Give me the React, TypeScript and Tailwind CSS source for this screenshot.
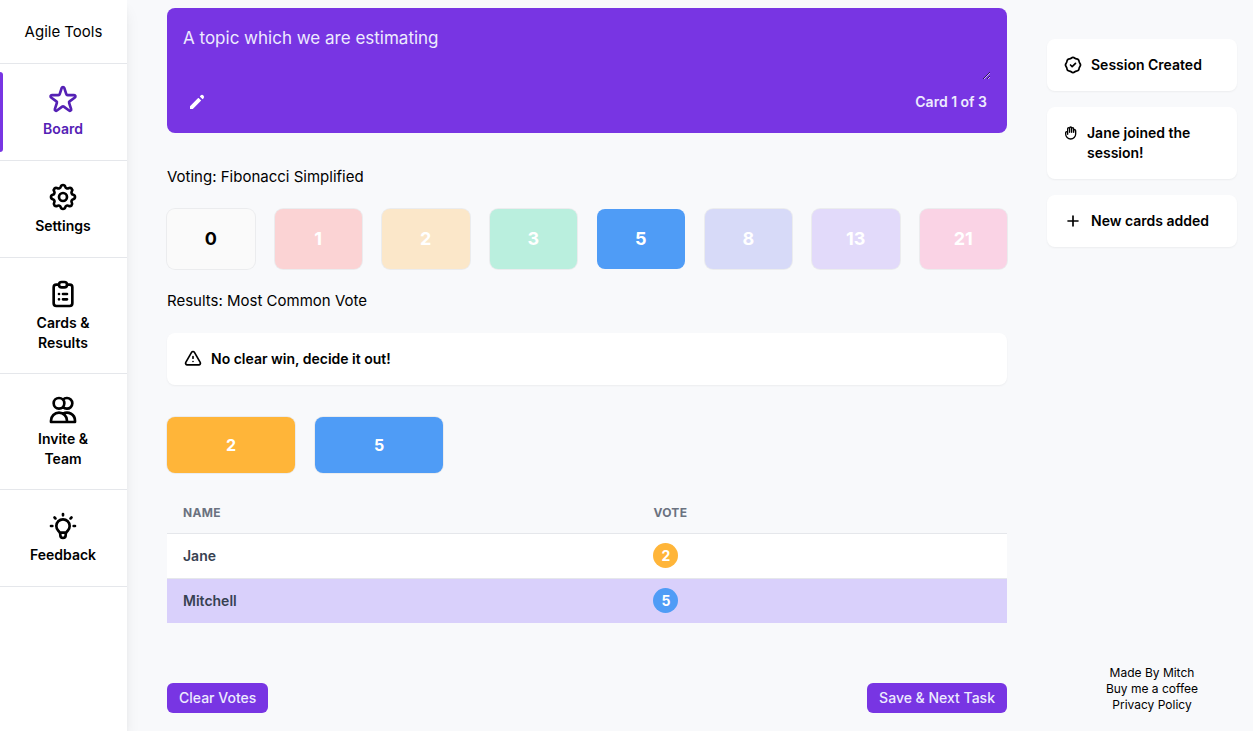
import {
  HiOutlineBadgeCheck,
  HiOutlineClipboardList,
  HiOutlineCog,
  HiOutlineExclamation,
  HiOutlineHand,
  HiOutlineLightBulb,
  HiOutlineStar,
  HiOutlineUsers,
  HiPencil,
} from "react-icons/hi";

const nav = [
  { label: "Board", Icon: HiOutlineStar, active: true },
  { label: "Settings", Icon: HiOutlineCog, active: false },
  { label: "Cards & Results", Icon: HiOutlineClipboardList, active: false },
  { label: "Invite & Team", Icon: HiOutlineUsers, active: false },
  { label: "Feedback", Icon: HiOutlineLightBulb, active: false },
];

const ring = "shadow-[0_0_0_1px_rgba(0,0,0,0.05)]";

const cards = [
  { value: 0, style: `bg-[#fafafa] text-black ${ring}` },
  { value: 1, style: `bg-[#fbd3d4] text-white ${ring}` },
  { value: 2, style: `bg-[#fbe7c9] text-white ${ring}` },
  { value: 3, style: `bg-[#baefde] text-white ${ring}` },
  { value: 5, style: "bg-[#4f9cf6] text-white" },
  { value: 8, style: `bg-[#d7daf8] text-white ${ring}` },
  { value: 13, style: `bg-[#e2dafa] text-white ${ring}` },
  { value: 21, style: `bg-[#fad3e5] text-white ${ring}` },
];

const votes = [
  { name: "Jane", vote: 2, row: "border-b border-gray-200 bg-white", color: "bg-[#ffb539]" },
  { name: "Mitchell", vote: 5, row: "bg-[#d9d0fb]", color: "bg-[#4f9cf6]" },
];

function PlusIcon({ className }: { className: string }) {
  return (
    <svg
      viewBox="0 0 24 24"
      className={className}
      fill="none"
      stroke="currentColor"
      strokeWidth={2}
      strokeLinecap="round"
      aria-hidden="true"
    >
      <path d="M12 6v12M6 12h12" />
    </svg>
  );
}

const notices = [
  { text: "Session Created", icon: <HiOutlineBadgeCheck className="h-5 w-5 shrink-0" /> },
  { text: "Jane joined the session!", icon: <HiOutlineHand className="h-5 w-4 shrink-0" /> },
  { text: "New cards added", icon: <PlusIcon className="h-5 w-5 shrink-0" /> },
];

export default function App() {
  return (
    <div className="flex min-h-screen bg-[#f8f9fb] font-['Inter',sans-serif] text-black">
      <aside className="z-10 w-[127px] shrink-0 bg-white shadow-[0_10px_15px_-3px_rgba(0,0,0,0.1),0_4px_6px_-2px_rgba(0,0,0,0.05)]">
        <a href="#" className="flex h-16 items-center justify-center border-b border-gray-200 text-[15px] leading-6">
          Agile Tools
        </a>
        <nav aria-label="Main">
          <ul>
            {nav.map(({ label, Icon, active }) => (
              <li key={label} className="relative min-h-[97px] border-b border-gray-200">
                {active && (
                  <span className="absolute inset-y-2 left-0 w-[3px] rounded-r-lg bg-[#7835e3]" />
                )}
                <a
                  href="#"
                  aria-current={active ? "page" : undefined}
                  className={`flex flex-col items-center gap-[3px] py-5 pr-[25px] pl-6 text-center text-sm font-semibold ${
                    active ? "text-[#5521b5]" : "text-black"
                  }`}
                >
                  <Icon className="h-8 w-8" />
                  {label}
                </a>
              </li>
            ))}
          </ul>
        </nav>
      </aside>

      <main className="min-w-0 flex-1 px-10 pt-2 pb-4">
        <section className="rounded-lg bg-[#7835e3] p-4 text-[#edebfe]">
          <textarea
            aria-label="Topic"
            rows={2}
            defaultValue="A topic which we are estimating"
            className="block w-full resize bg-transparent text-[17px] leading-7 outline-none"
          />
          <div className="flex items-end justify-between px-1 pt-3">
            <button type="button" aria-label="Edit topic" className="pb-[5px] text-white">
              <HiPencil className="h-5 w-5" />
            </button>
            <span className="pb-[5px] text-sm font-semibold">Card 1 of 3</span>
          </div>
        </section>

        <h2 className="mt-8 text-[15px] leading-6">Voting: Fibonacci Simplified</h2>
        <div className="mt-5 grid grid-cols-8 gap-5">
          {cards.map((card) => (
            <button
              key={card.value}
              type="button"
              className={`h-15 rounded-lg text-lg font-bold ${card.style}`}
            >
              {card.value}
            </button>
          ))}
        </div>

        <h2 className="mt-5 text-[15px] leading-6">Results: Most Common Vote</h2>
        <div className="mt-5 flex items-center gap-2 rounded-lg bg-white p-4 text-sm font-semibold shadow-[0_1px_2px_rgba(0,0,0,0.05)]">
          <HiOutlineExclamation className="h-5 w-5" />
          No clear win, decide it out!
        </div>

        <div className="mt-8 flex gap-5">
          <button type="button" className={`h-14 w-32 rounded-lg bg-[#ffb539] font-bold text-white ${ring}`}>
            2
          </button>
          <button type="button" className={`h-14 w-32 rounded-lg bg-[#4f9cf6] font-bold text-white ${ring}`}>
            5
          </button>
        </div>

        <table className="mt-5 w-full table-fixed border-collapse text-left text-sm font-semibold">
          <thead>
            <tr className="h-10 border-b border-gray-200 text-xs tracking-wide text-[#6b7280] uppercase">
              <th scope="col" className="w-[56%] px-4 font-bold">Name</th>
              <th scope="col" className="px-4 font-bold">Vote</th>
            </tr>
          </thead>
          <tbody className="text-[#374151]">
            {votes.map((entry) => (
              <tr key={entry.name} className={`h-[45px] ${entry.row}`}>
                <td className="px-4">{entry.name}</td>
                <td className="px-4">
                  <span className={`flex h-[25px] w-[25px] items-center justify-center rounded-full font-bold text-white ${entry.color}`}>
                    {entry.vote}
                  </span>
                </td>
              </tr>
            ))}
          </tbody>
        </table>

        <div className="mt-[60px] flex justify-between text-sm font-medium text-[#edebfe]">
          <button type="button" className="rounded-md bg-[#7835e3] px-3 py-[5px]">
            Clear Votes
          </button>
          <button type="button" className="rounded-md bg-[#7835e3] px-3 py-[5px]">
            Save &amp; Next Task
          </button>
        </div>
      </main>

      <aside className="flex w-[206px] shrink-0 flex-col justify-between pt-[39px] pb-[18px]">
        <ul className="mr-4 space-y-4 text-sm font-semibold">
          {notices.map((notice) => (
            <li
              key={notice.text}
              className="flex items-start gap-2 rounded-lg bg-white p-4 shadow-[0_1px_2px_rgba(0,0,0,0.05)]"
            >
              {notice.icon}
              {notice.text}
            </li>
          ))}
        </ul>
        <footer className="flex flex-col items-center pl-1 text-xs">
          <a href="#">Made By Mitch</a>
          <a href="#">Buy me a coffee</a>
          <a href="#">Privacy Policy</a>
        </footer>
      </aside>
    </div>
  );
}
